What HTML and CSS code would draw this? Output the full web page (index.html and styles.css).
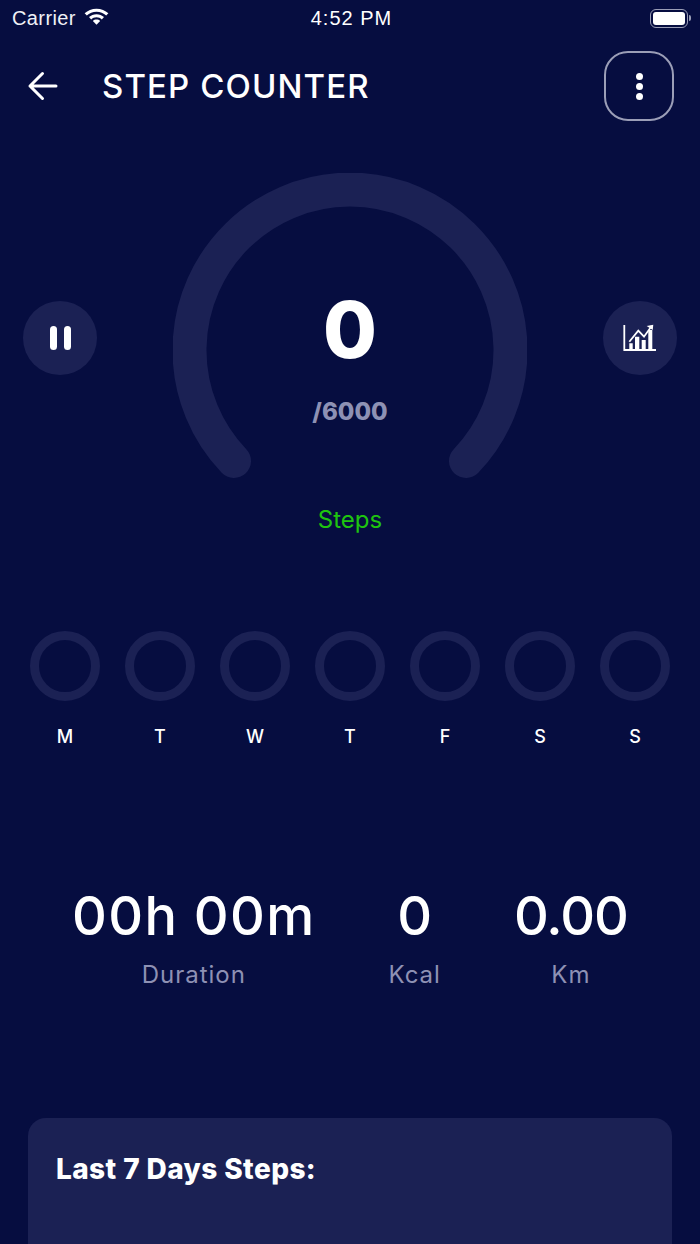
FILE: index.html
```html
<!DOCTYPE html>
<html lang="en">
<head>
<title>Step Counter</title>
<link rel="stylesheet" href="styles.css">
</head>
<body>
<div class="status-bar">
    <div class="status-left">
        <span class="carrier">Carrier</span>
        <svg class="wifi" width="25" height="18" viewBox="1 2.500 24 17">
            <path d="M13 3C8.500 3 4.600 4.700 1.600 7.400L3.700 9.600C6.200 7.400 9.400 6 13 6s6.800 1.400 9.300 3.600l2.100-2.200C21.400 4.700 17.500 3 13 3z" fill="#fff"/>
            <path d="M13 8.300c-2.800 0-5.300 1-7.200 2.800l2.100 2.200c1.400-1.200 3.100-2 5.100-2s3.700.8 5.100 2l2.100-2.200C18.300 9.300 15.800 8.300 13 8.300z" fill="#fff"/>
            <path d="M13 13.500c-1.400 0-2.600.5-3.500 1.300L13 18.500l3.500-3.700c-.9-.8-2.100-1.300-3.500-1.300z" fill="#fff"/>
        </svg>
    </div>
    <span class="clock">4:52 PM</span>
    <div class="status-right">
        <div class="battery"><div class="battery-fill"></div></div>
        <div class="battery-cap"></div>
    </div>
</div>

<header class="app-header">
    <svg class="back-icon" width="32" height="30" viewBox="0 0 32 30">
        <path d="M30 15H4M16.500 2.500L4 15l12.500 12.500" fill="none" stroke="#fff" stroke-width="3" stroke-linecap="round" stroke-linejoin="round"/>
    </svg>
    <h1 class="app-title">STEP COUNTER</h1>
    <button class="menu-button">
        <span class="menu-dot"></span>
        <span class="menu-dot"></span>
        <span class="menu-dot"></span>
    </button>
</header>

<section class="gauge-row">
    <div class="round-button">
        <div class="pause-icon"><span></span><span></span></div>
    </div>
    <div class="gauge">
        <svg class="gauge-arc" width="354" height="354" viewBox="0 0 354 354">
            <path d="M61 288A160.500 160.500 0 1 1 293 288" fill="none" stroke="#1b2154" stroke-width="34" stroke-linecap="round"/>
        </svg>
        <div class="gauge-text">
            <div class="step-count">0</div>
            <div class="step-goal">/6000</div>
        </div>
    </div>
    <div class="round-button">
        <svg width="34" height="30" viewBox="0 0 34 30">
            <path d="M1.300 2V27H33" fill="none" stroke="#fff" stroke-width="1.800"/>
            <path d="M6.300 26V20.300H9.700V26zM12 26V13.700H16.300V26zM18.700 26V17H22.700V26zM25.300 26V7H29.300V26z" fill="#fff"/>
            <path d="M6.300 18.700L15.300 7.700L21 13.700L28.700 3" fill="none" stroke="#fff" stroke-width="1.800"/>
            <path d="M23.700 3L30.300 1.700L29.700 7z" fill="#fff"/>
        </svg>
    </div>
</section>
<div class="steps-label">Steps</div>

<section class="week">
    <div class="day"><div class="day-ring"></div><span>M</span></div>
    <div class="day"><div class="day-ring"></div><span>T</span></div>
    <div class="day"><div class="day-ring"></div><span>W</span></div>
    <div class="day"><div class="day-ring"></div><span>T</span></div>
    <div class="day"><div class="day-ring"></div><span>F</span></div>
    <div class="day"><div class="day-ring"></div><span>S</span></div>
    <div class="day"><div class="day-ring"></div><span>S</span></div>
</section>

<section class="stats">
    <div class="stat stat-duration">
        <div class="stat-value">00h 00m</div>
        <div class="stat-label">Duration</div>
    </div>
    <div class="stat stat-kcal">
        <div class="stat-value">0</div>
        <div class="stat-label">Kcal</div>
    </div>
    <div class="stat stat-km">
        <div class="stat-value">0.00</div>
        <div class="stat-label">Km</div>
    </div>
</section>

<section class="history-card">
    <h2 class="history-title">Last 7 Days Steps:</h2>
</section>
</body>
</html>
```

FILE: styles.css
```css
html, body {
    height: 100%;
    margin: 0;
    overflow: hidden;
    background-color: #060d40;
    color: white;
    font-family: "Inter", "Liberation Sans", sans-serif;
}

body {
    display: flex;
    flex-direction: column;
}

.status-bar {
    display: flex;
    justify-content: space-between;
    align-items: center;
    height: 36px;
    padding: 0 9px 0 12px;
    font-family: "Liberation Sans", sans-serif;
    font-size: 20px;
}

.status-left,
.status-right {
    display: flex;
    align-items: center;
    width: 130px;
}

.status-left {
    gap: 8px;
}

.status-right {
    justify-content: flex-end;
}

.carrier {
    color: #f0f1f6;
    letter-spacing: 0.4px;
}

.wifi {
    margin-top: -2px;
}

.clock {
    letter-spacing: 1px;
}

.battery {
    box-sizing: border-box;
    width: 38px;
    height: 19px;
    padding: 2px;
    border: 1.5px solid #9a9db6;
    border-radius: 6px;
}

.battery-fill {
    height: 100%;
    background-color: white;
    border-radius: 3px;
}

.battery-cap {
    width: 2px;
    height: 6px;
    margin-left: 1px;
    background-color: #9a9db6;
    border-radius: 0 2px 2px 0;
}

.app-header {
    display: flex;
    align-items: center;
    height: 70px;
    margin-top: 15px;
    padding: 0 26px;
}

.back-icon {
    flex-shrink: 0;
}

.app-title {
    flex: 1;
    margin: 0 0 0 44px;
    font-size: 33px;
    font-weight: 500;
    letter-spacing: 1.1px;
}

.menu-button {
    display: flex;
    flex-direction: column;
    justify-content: center;
    align-items: center;
    gap: 3px;
    box-sizing: border-box;
    width: 70px;
    height: 70px;
    padding: 0;
    background: none;
    border: 2px solid #9b9eb7;
    border-radius: 24px;
}

.menu-dot {
    width: 7px;
    height: 7px;
    background-color: white;
    border-radius: 50%;
}

.gauge-row {
    display: flex;
    justify-content: space-between;
    align-items: flex-start;
    margin-top: 52px;
    padding: 0 23px;
}

.round-button {
    display: flex;
    justify-content: center;
    align-items: center;
    width: 74px;
    height: 74px;
    margin-top: 128px;
    background-color: #1b2154;
    border-radius: 50%;
}

.pause-icon {
    display: flex;
    gap: 7px;
}

.pause-icon span {
    width: 7px;
    height: 24px;
    background-color: white;
    border-radius: 4px;
}

.gauge {
    display: grid;
    width: 354px;
    height: 354px;
}

.gauge-arc,
.gauge-text {
    grid-area: 1 / 1;
}

.gauge-text {
    display: flex;
    flex-direction: column;
    align-items: center;
    padding-top: 115px;
}

.step-count {
    font-size: 78px;
    font-weight: 800;
    line-height: 84px;
}

.step-goal {
    margin-top: 24px;
    color: #8e91b4;
    font-size: 24px;
    font-weight: 800;
    line-height: 32px;
}

.steps-label {
    margin-top: -22px;
    color: #1fc40f;
    font-size: 24px;
    line-height: 30px;
    text-align: center;
}

.week {
    display: flex;
    justify-content: space-between;
    margin-top: 96px;
    padding: 0 30px;
}

.day {
    display: flex;
    flex-direction: column;
    align-items: center;
    gap: 25px;
    font-size: 18px;
    font-weight: 500;
    line-height: 22px;
}

.day-ring {
    box-sizing: border-box;
    width: 70px;
    height: 70px;
    border: 9px solid #1b2154;
    border-radius: 50%;
}

.stats {
    display: flex;
    justify-content: center;
    gap: 73px;
    margin-top: 135px;
}

.stat {
    display: flex;
    flex-direction: column;
    align-items: center;
}

.stat-value {
    font-size: 54px;
    font-weight: 500;
    line-height: 66px;
}

.stat-duration .stat-value {
    letter-spacing: 1.3px;
}

.stat-km .stat-value {
    letter-spacing: -1px;
}

.stat-label {
    margin-top: 11px;
    color: #8e91b4;
    font-size: 24px;
    letter-spacing: 1px;
    line-height: 30px;
}

.history-card {
    flex: 1;
    margin: 128px 28px 0;
    padding: 35px 28px;
    background-color: #1b2154;
    border-radius: 18px 18px 0 0;
}

.history-title {
    margin: 0;
    font-size: 28px;
    font-weight: 800;
    letter-spacing: 0.4px;
    line-height: 32px;
}
```
